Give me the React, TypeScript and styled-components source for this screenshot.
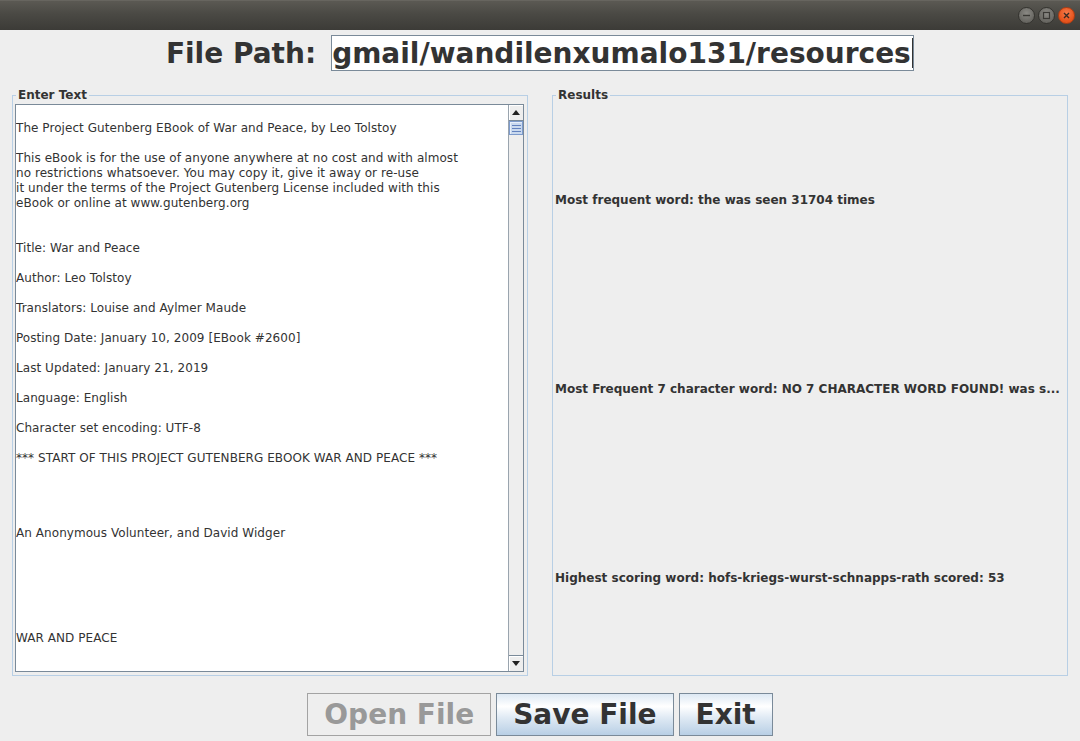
import React from "react";
import styled, { createGlobalStyle } from "styled-components";

const Global = createGlobalStyle`
  html, body { margin: 0; padding: 0; background: #eeeeee; overflow: hidden; }
  * { box-sizing: border-box; }
`;

const FONT = `"DejaVu Sans", "Noto Sans", sans-serif`;

const Window = styled.div`
  width: 1080px;
  height: 741px;
  display: flex;
  flex-direction: column;
  background: #eeeeee;
  font-family: ${FONT};
  color: #333333;
`;

const TitleBar = styled.div`
  height: 30px;
  flex: none;
  display: flex;
  align-items: center;
  justify-content: flex-end;
  gap: 3px;
  padding-right: 5px;
  background: linear-gradient(180deg, #5b5953 0%, #4a4944 45%, #3c3b37 100%);
  border-top: 1px solid #67655f;
`;

const WinButton = styled.div<{ $close?: boolean }>`
  width: 17px;
  height: 17px;
  border-radius: 50%;
  display: flex;
  align-items: center;
  justify-content: center;
  border: 1px solid ${(p) => (p.$close ? "#b23d13" : "#34332f")};
  background: ${(p) =>
    p.$close
      ? "radial-gradient(circle at 50% 35%, #f37b4c 0%, #e8561f 60%, #d24a17 100%)"
      : "radial-gradient(circle at 50% 35%, #8a8984 0%, #6c6b66 60%, #5a5954 100%)"};
`;

const Header = styled.div`
  flex: none;
  display: flex;
  justify-content: center;
  align-items: center;
  gap: 15px;
  margin-top: 5px;
  height: 36px;
  margin-bottom: 17px;
`;

const PathLabel = styled.span`
  font-size: 28px;
  font-weight: bold;
  color: #333333;
  white-space: nowrap;
`;

const PathField = styled.div`
  width: 583px;
  height: 36px;
  border: 1px solid #7a8a99;
  background: #ffffff;
  padding-left: 0;
  display: flex;
  align-items: center;
  overflow: hidden;
  font-size: 28px;
  font-weight: bold;
  color: #333333;
  white-space: nowrap;
`;

const Caret = styled.span`
  width: 1px;
  height: 30px;
  background: #333333;
  flex: none;
  margin-left: 1px;
`;

const Panels = styled.div`
  flex: none;
  height: 588px;
  display: grid;
  grid-template-columns: 1fr 1fr;
  column-gap: 24px;
  padding: 0 12px;
`;

const Group = styled.fieldset<{ $padLeft: number }>`
  margin: 0;
  min-width: 0;
  height: 588px;
  border: 1px solid #b8cfe5;
  padding: 2px 3px 3px ${(p) => p.$padLeft}px;
  display: flex;
  flex-direction: column;
`;

const Legend = styled.legend<{ $shift: number }>`
  font-family: ${FONT};
  font-size: 12px;
  font-weight: bold;
  line-height: 14px;
  color: #333333;
  padding: 0 2px;
  margin-left: ${(p) => p.$shift}px;
`;

const ScrollPane = styled.div`
  flex: 1;
  min-height: 0;
  display: flex;
  border: 1px solid #7a8a99;
  background: #ffffff;
`;

const TextView = styled.pre`
  flex: 1;
  margin: 0;
  padding-top: 1px;
  overflow: hidden;
  font-family: ${FONT};
  font-size: 12px;
  line-height: 15px;
  letter-spacing: 0.06px;
  color: #333333;
  white-space: pre;
`;

const ScrollBar = styled.div`
  width: 15px;
  flex: none;
  display: flex;
  flex-direction: column;
  border-left: 1px solid #9aa4ae;
  background: #eeeeee;
`;

const ArrowButton = styled.div<{ $down?: boolean }>`
  height: 16px;
  flex: none;
  display: flex;
  align-items: center;
  justify-content: center;
  background: #eeeeee;
  box-shadow: inset 1px 1px 0 #ffffff;
  ${(p) => (p.$down ? "border-top: 1px solid #7a8a99;" : "border-bottom: 1px solid #7a8a99;")}
`;

const Triangle = styled.span<{ $down?: boolean }>`
  width: 0;
  height: 0;
  border-left: 4px solid transparent;
  border-right: 4px solid transparent;
  ${(p) =>
    p.$down ? "border-top: 5px solid #222222;" : "border-bottom: 5px solid #222222;"}
`;

const Track = styled.div`
  flex: 1;
  display: flex;
  flex-direction: column;
`;

const Thumb = styled.div`
  height: 14px;
  flex: none;
  border: 1px solid #7d9bcc;
  background: #c9d9ee;
  box-shadow: inset 1px 1px 0 #e6eefa;
  display: flex;
  flex-direction: column;
  justify-content: center;
  align-items: center;
  gap: 2px;
`;

const Grip = styled.span`
  width: 9px;
  height: 1px;
  background: #6382bf;
`;

const ResultsGrid = styled.div`
  flex: 1;
  display: grid;
  grid-template-rows: 1fr 1fr 1fr;
  padding-top: 2px;
`;

const ResultLabel = styled.div`
  display: flex;
  align-items: center;
  font-size: 12px;
  font-weight: bold;
  color: #333333;
  white-space: nowrap;
  overflow: hidden;
`;

const Footer = styled.div`
  flex: none;
  display: flex;
  justify-content: center;
  gap: 5px;
  margin-top: 17px;
`;

const ActionButton = styled.button<{ $disabled?: boolean }>`
  height: 43px;
  padding: 0 16px;
  font-family: ${FONT};
  font-size: 28px;
  font-weight: bold;
  line-height: 1;
  border: 1px solid ${(p) => (p.$disabled ? "#a3a3a3" : "#7a8a99")};
  color: ${(p) => (p.$disabled ? "#999999" : "#333333")};
  background: ${(p) =>
    p.$disabled
      ? "#eeeeee"
      : "linear-gradient(180deg, #dde8f3 0%, #ffffff 30%, #dde8f3 60%, #b8cfe5 100%)"};
  cursor: default;
`;

const lines: string[] = [
  "",
  "The Project Gutenberg EBook of War and Peace, by Leo Tolstoy",
  "",
  "This eBook is for the use of anyone anywhere at no cost and with almost",
  "no restrictions whatsoever. You may copy it, give it away or re-use",
  "it under the terms of the Project Gutenberg License included with this",
  "eBook or online at www.gutenberg.org",
  "",
  "",
  "Title: War and Peace",
  "",
  "Author: Leo Tolstoy",
  "",
  "Translators: Louise and Aylmer Maude",
  "",
  "Posting Date: January 10, 2009 [EBook #2600]",
  "",
  "Last Updated: January 21, 2019",
  "",
  "Language: English",
  "",
  "Character set encoding: UTF-8",
  "",
  "*** START OF THIS PROJECT GUTENBERG EBOOK WAR AND PEACE ***",
  "",
  "",
  "",
  "",
  "An Anonymous Volunteer, and David Widger",
  "",
  "",
  "",
  "",
  "",
  "",
  "WAR AND PEACE",
  "",
  "",
  "",
];

const results = [
  "Most frequent word: the was seen 31704 times",
  "Most Frequent 7 character word: NO 7 CHARACTER WORD FOUND! was s...",
  "Highest scoring word: hofs-kriegs-wurst-schnapps-rath scored: 53",
];

export default function App() {
  return (
    <>
      <Global />
      <Window>
        <TitleBar>
          <WinButton>
            <svg width="9" height="9" viewBox="0 0 9 9">
              <line x1="1" y1="4.5" x2="8" y2="4.5" stroke="#3a3935" strokeWidth="1.4" />
            </svg>
          </WinButton>
          <WinButton>
            <svg width="9" height="9" viewBox="0 0 9 9">
              <rect x="1.5" y="1.5" width="6" height="6" fill="none" stroke="#3a3935" strokeWidth="1.2" />
            </svg>
          </WinButton>
          <WinButton $close>
            <svg width="9" height="9" viewBox="0 0 9 9">
              <path d="M2 2 L7 7 M7 2 L2 7" stroke="#3a2a22" strokeWidth="1.4" />
            </svg>
          </WinButton>
        </TitleBar>

        <Header>
          <PathLabel>File Path:</PathLabel>
          <PathField>
            gmail/wandilenxumalo131/resources
            <Caret />
          </PathField>
        </Header>

        <Panels>
          <Group $padLeft={2}>
            <Legend $shift={1}>Enter Text</Legend>
            <ScrollPane>
              <TextView>{lines.join("\n")}</TextView>
              <ScrollBar>
                <ArrowButton>
                  <Triangle />
                </ArrowButton>
                <Track>
                  <Thumb>
                    <Grip />
                    <Grip />
                    <Grip />
                  </Thumb>
                </Track>
                <ArrowButton $down>
                  <Triangle $down />
                </ArrowButton>
              </ScrollBar>
            </ScrollPane>
          </Group>

          <Group $padLeft={2}>
            <Legend $shift={1}>Results</Legend>
            <ResultsGrid>
              {results.map((r) => (
                <ResultLabel key={r}>{r}</ResultLabel>
              ))}
            </ResultsGrid>
          </Group>
        </Panels>

        <Footer>
          <ActionButton $disabled disabled>
            Open File
          </ActionButton>
          <ActionButton>Save File</ActionButton>
          <ActionButton>Exit</ActionButton>
        </Footer>
      </Window>
    </>
  );
}
